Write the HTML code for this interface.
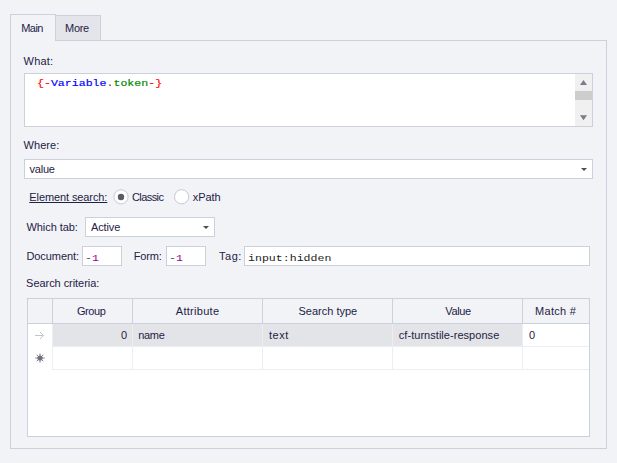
<!DOCTYPE html>
<html><head><meta charset="utf-8">
<style>
html,body{margin:0;padding:0}
body{width:617px;height:463px;overflow:hidden;background:#f1f3f7;position:relative;font-family:"Liberation Sans",sans-serif;font-size:11px;color:#1f2245}
.abs{position:absolute;box-sizing:border-box}
.lbl{position:absolute;white-space:nowrap;line-height:13px;height:13px}
.box{position:absolute;box-sizing:border-box;background:#fff;border:1px solid #cbd0dc}
.mono{font-family:"Liberation Mono",monospace;font-size:11.58px;transform:scaleY(0.85);transform-origin:0 10px;position:absolute;white-space:nowrap;line-height:13px}
</style></head><body>
<!-- panel -->
<div class="abs" style="left:10px;top:40px;width:597px;height:409px;border:1px solid #cbd0dc"></div>
<!-- tabs -->
<div class="abs" style="left:55px;top:15px;width:46px;height:26px;border:1px solid #cbd0dc;background:#e4e5ea"></div>
<div class="abs" style="left:10px;top:14px;width:46px;height:27px;border:1px solid #cbd0dc;border-bottom:none;background:#f1f3f7"></div>

<div class="box" style="left:24px;top:73px;width:569px;height:54px"></div>
<div class="abs" style="left:575px;top:74px;width:17px;height:52px;background:#f0f0f0"></div>
<div class="abs" style="left:575px;top:91px;width:17px;height:9px;background:#cdcdcd"></div>
<svg class="abs" style="left:575px;top:74px" width="17" height="52"><path d="M5 11 L8.5 6 L12 11Z" fill="#7b7b8a"/><path d="M5 41.2 L8.5 46.2 L12 41.2Z" fill="#7b7b8a"/></svg>
<div class="mono" style="left:37px;top:76px;-webkit-text-stroke:0.2px"><span style="color:#f00">{-</span><span style="color:#00f">Variable</span><span style="color:#555">.</span><span style="color:#080">token</span><span style="color:#f00">-}</span></div>

<div class="box" style="left:24px;top:159px;width:569px;height:20px"></div>
<svg class="abs" style="left:580px;top:167px" width="8" height="5"><path d="M1 1 L7 1 L4 4Z" fill="#484b58"/></svg>

<svg class="abs" style="left:108px;top:184px" width="90" height="26"><circle cx="13" cy="12.8" r="7.1" fill="#fff" stroke="#c9c9d0" stroke-width="1"/><circle cx="13" cy="13" r="3.2" fill="#585c68"/><circle cx="73.6" cy="12.8" r="7.1" fill="#fff" stroke="#c9c9d0" stroke-width="1"/></svg>

<div class="box" style="left:85px;top:217px;width:130px;height:20px"></div>
<svg class="abs" style="left:202px;top:225px" width="8" height="5"><path d="M1 1 L7 1 L4 4Z" fill="#484b58"/></svg>

<div class="box" style="left:82px;top:246px;width:40px;height:20px"></div>
<div class="mono" style="left:85px;top:251px"><span style="color:#333">-</span><span style="color:#909">1</span></div>
<div class="box" style="left:166px;top:246px;width:40px;height:20px"></div>
<div class="mono" style="left:169px;top:251px"><span style="color:#333">-</span><span style="color:#909">1</span></div>
<div class="box" style="left:244px;top:246px;width:346px;height:20px"></div>
<div class="mono" style="left:248px;top:251px;color:#222">input:hidden</div>

<!-- table -->
<div class="box" style="left:27px;top:298px;width:563px;height:139px"></div>
<div class="abs" style="left:28px;top:299px;width:561px;height:24px;background:#f1f3f7"></div>
<div class="abs" style="left:28px;top:323px;width:561px;height:1px;background:#cbd0dc"></div>
<div class="abs" style="left:53px;top:324px;width:469px;height:22px;background:#e3e4e8"></div>
<!-- header vertical lines -->
<div class="abs" style="left:52px;top:299px;width:1px;height:24px;background:#cbd0dc"></div>
<div class="abs" style="left:132px;top:299px;width:1px;height:24px;background:#cbd0dc"></div>
<div class="abs" style="left:262px;top:299px;width:1px;height:24px;background:#cbd0dc"></div>
<div class="abs" style="left:392px;top:299px;width:1px;height:24px;background:#cbd0dc"></div>
<div class="abs" style="left:522px;top:299px;width:1px;height:24px;background:#cbd0dc"></div>
<!-- body lines -->
<div class="abs" style="left:52px;top:324px;width:1px;height:46px;background:#eceef3"></div>
<div class="abs" style="left:132px;top:324px;width:1px;height:46px;background:#eceef3"></div>
<div class="abs" style="left:262px;top:324px;width:1px;height:46px;background:#eceef3"></div>
<div class="abs" style="left:392px;top:324px;width:1px;height:46px;background:#eceef3"></div>
<div class="abs" style="left:522px;top:324px;width:1px;height:46px;background:#eceef3"></div>
<div class="abs" style="left:53px;top:346px;width:536px;height:1px;background:#eceef3"></div>
<div class="abs" style="left:53px;top:369px;width:536px;height:1px;background:#eceef3"></div>
<!-- header text -->
<!-- row text -->
<!-- indicators -->
<svg class="abs" style="left:33px;top:330px" width="13" height="11"><path d="M2 5.5 H10.5 M7 2 L10.5 5.5 L7 9" stroke="#c4c4cc" stroke-width="1" fill="none"/></svg>
<svg class="abs" style="left:35px;top:353px" width="10" height="10"><path d="M5 0.3 V9.7 M0.3 5 H9.7 M1.7 1.7 L8.3 8.3 M8.3 1.7 L1.7 8.3" stroke="#80838e" stroke-width="1" fill="none"/><circle cx="5" cy="5" r="2.6" fill="#6f727d"/></svg>
<div class="lbl" style="left:21.3px;top:22px;letter-spacing:-0.6px;">Main</div>
<div class="lbl" style="left:65.1px;top:22px;letter-spacing:-0.37px;">More</div>
<div class="lbl" style="left:23.6px;top:55px;letter-spacing:0.16px;">What:</div>
<div class="lbl" style="left:23.5px;top:139px;letter-spacing:0.08px;">Where:</div>
<div class="lbl" style="left:29.6px;top:163px;letter-spacing:-0.24px;">value</div>
<div class="lbl" style="left:29.3px;top:191px;letter-spacing:-0.1px;text-decoration:underline;text-underline-offset:1px">Element search:</div>
<div class="lbl" style="left:131.9px;top:191px;letter-spacing:-0.56px;">Classic</div>
<div class="lbl" style="left:192.8px;top:191px;letter-spacing:-0.08px;">xPath</div>
<div class="lbl" style="left:26.4px;top:221px;letter-spacing:-0.05px;">Which tab:</div>
<div class="lbl" style="left:91.1px;top:221px;letter-spacing:-0.16px;">Active</div>
<div class="lbl" style="left:26.4px;top:250px;letter-spacing:-0.06px;">Document:</div>
<div class="lbl" style="left:133.8px;top:250px;letter-spacing:-0.2px;">Form:</div>
<div class="lbl" style="left:219px;top:250px;letter-spacing:0.54px;">Tag:</div>
<div class="lbl" style="left:26.1px;top:277px;letter-spacing:-0.05px;">Search criteria:</div>
<div class="lbl" style="left:76.9px;top:305px;letter-spacing:-0.4px;">Group</div>
<div class="lbl" style="left:175.8px;top:305px;letter-spacing:0.28px;">Attribute</div>
<div class="lbl" style="left:298.5px;top:305px;letter-spacing:-0px;">Search type</div>
<div class="lbl" style="left:445.3px;top:305px;letter-spacing:-0.36px;">Value</div>
<div class="lbl" style="left:535.1px;top:305px;letter-spacing:0.29px;">Match #</div>
<div class="lbl" style="left:120.9px;top:329px;letter-spacing:0px;">0</div>
<div class="lbl" style="left:138.2px;top:329px;letter-spacing:-0.31px;">name</div>
<div class="lbl" style="left:268.9px;top:329px;letter-spacing:0.59px;">text</div>
<div class="lbl" style="left:398.8px;top:329px;letter-spacing:0.04px;">cf-turnstile-response</div>
<div class="lbl" style="left:528.9px;top:329px;letter-spacing:0px;">0</div>
</body></html>
